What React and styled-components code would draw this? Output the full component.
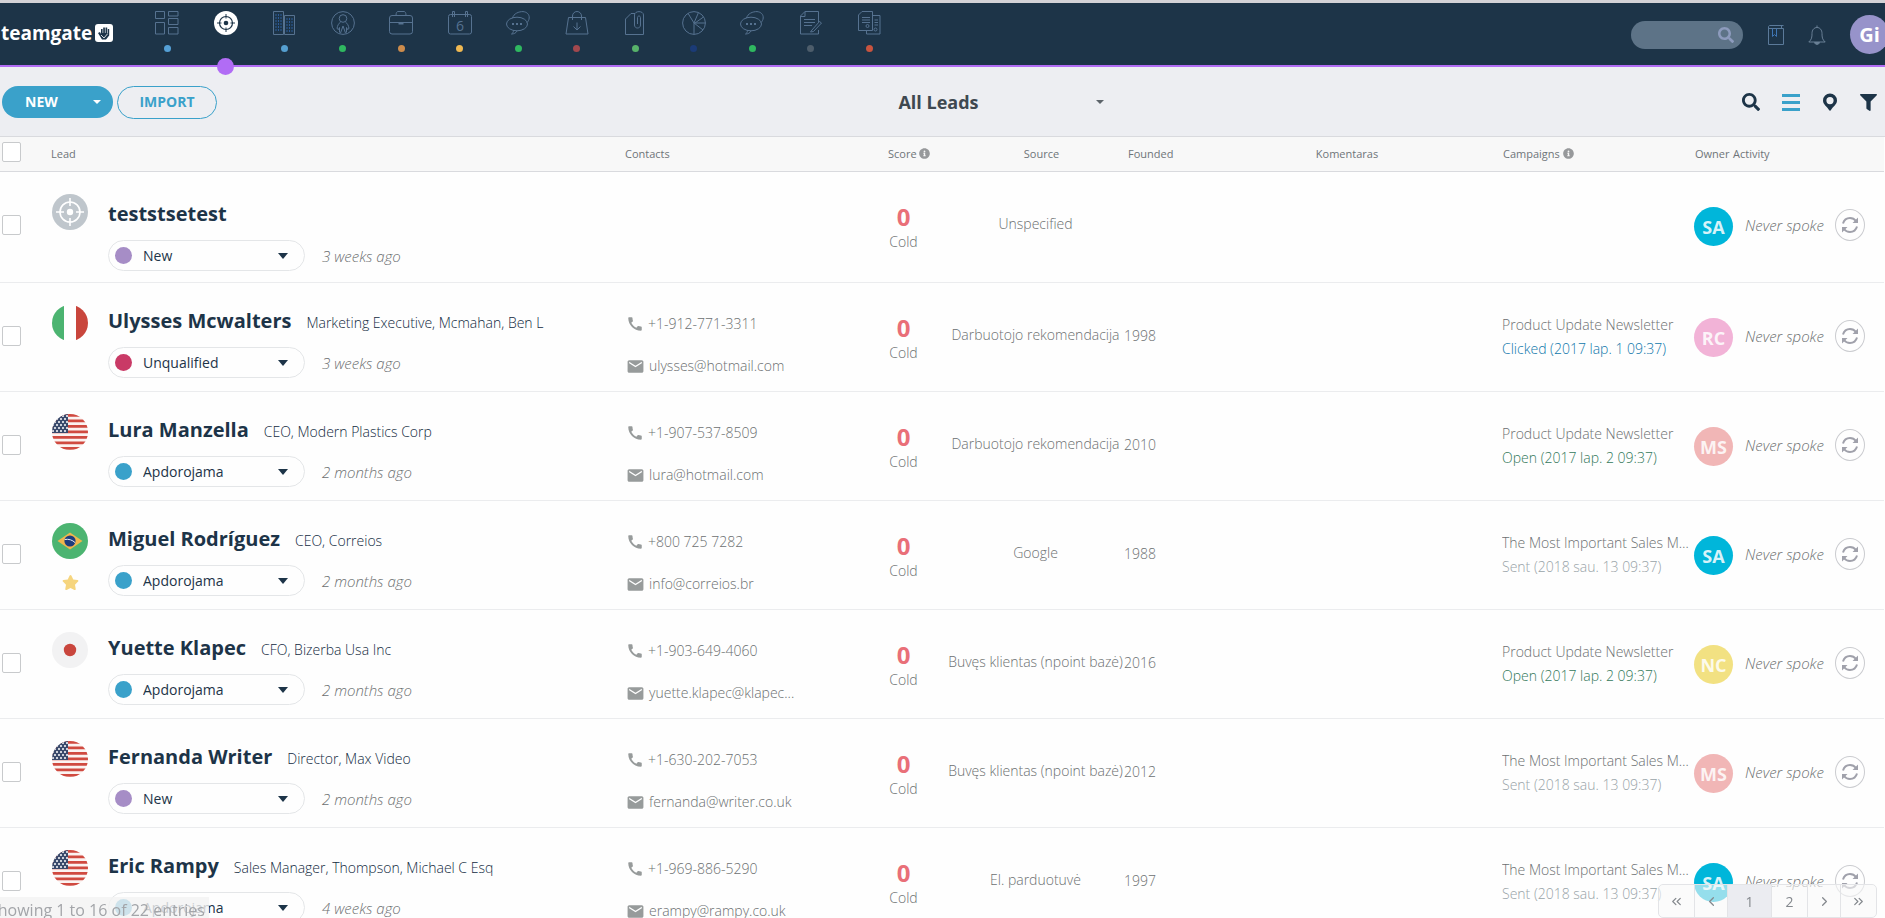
import React from "react";
import styled, { createGlobalStyle, css } from "styled-components";
import { FaSearch, FaInfoCircle, FaFilter, FaStar } from "react-icons/fa";
import { MdCall, MdEmail } from "react-icons/md";
import { ChevronLeft, ChevronRight, ChevronsLeft, ChevronsRight } from "lucide-react";

const GlobalStyle = createGlobalStyle`
  * { box-sizing: border-box; }
  body {
    margin: 0;
    overflow: hidden;
    background: #fefefe;
    color: #6c7071;
    font-family: "Open Sans", "Noto Sans", sans-serif;
    font-size: 14px;
    font-weight: 300;
    line-height: 20px;
  }
  button, select, input { font-family: inherit; }
`;

const Page = styled.div`
  height: 100vh;
  overflow: hidden;
`;

/* ---------- top bar ---------- */

const TopBar = styled.header`
  display: flex;
  align-items: flex-start;
  height: 67px;
  padding-left: 1px;
  background: #1d3448;
  border-top: 3px solid #d3d2d6;
  border-bottom: 2px solid #b16cf5;
`;

const Logo = styled.a`
  display: flex;
  align-items: center;
  gap: 3px;
  width: 154px;
  padding-top: 17px;
  color: #fff;
  font-size: 19px;
  font-weight: 700;
  line-height: 26px;
  text-decoration: none;
`;

const Nav = styled.nav`
  display: flex;
  justify-content: space-between;
  width: 726px;
  padding-top: 8px;
`;

const NavItem = styled.a`
  display: flex;
  flex-direction: column;
  align-items: center;
  gap: ${props => props.$active ? 23 : 10}px;
  width: 24px;
  color: ${props => props.$active ? "#fff" : "#567290"};

  svg { display: block; fill: none; stroke: currentColor; }
`;

const NavDot = styled.span`
  flex: none;
  width: ${props => props.$big ? 17 : 7}px;
  height: ${props => props.$big ? 17 : 7}px;
  border-radius: 50%;
  background: ${props => props.$color};
  z-index: 1;
`;

const TopRight = styled.div`
  display: flex;
  align-items: center;
  margin-left: auto;
  margin-right: -4px;
  padding-top: 12px;
  color: #5b7186;
`;

const SearchBox = styled.label`
  display: flex;
  align-items: center;
  width: 112px;
  height: 28px;
  padding: 0 9px 0 14px;
  margin-right: 25px;
  border-radius: 14px;
  background: #5d7387;
  color: #8d9bbd;

  input {
    flex: 1;
    min-width: 0;
    border: 0;
    outline: 0;
    background: transparent;
    color: #fff;
  }
`;

const IconButton = styled.button`
  display: flex;
  padding: 0;
  border: 0;
  background: none;
  color: ${props => props.$color || "#1d3448"};
`;

const TopActions = styled.div`
  display: flex;
  align-items: center;
  gap: 24px;
`;

const Avatar = styled.span`
  display: flex;
  flex: none;
  align-items: center;
  justify-content: center;
  width: 39px;
  height: 39px;
  border-radius: 50%;
  background: ${props => props.$color};
  color: ${props => props.$plain ? "#fff" : "rgba(255, 255, 255, 0.85)"};
  font-size: ${props => props.$plain ? 20 : 18}px;
  font-weight: 700;
`;

/* ---------- toolbar ---------- */

const Toolbar = styled.div`
  display: grid;
  grid-template-columns: 1fr auto 1fr;
  align-items: center;
  height: 70px;
  padding: 1px 8px 0 2px;
  background: #edeef2;
  border-bottom: 1px solid #d9dade;
`;

const Buttons = styled.div`
  display: flex;
  align-items: center;
  gap: 4px;
`;

const SplitButton = styled.div`
  display: flex;
  height: 32px;
  border-radius: 16px;
  overflow: hidden;
  background: #3aa1ca;
`;

const pillText = css`
  border: 0;
  padding: 0;
  font-size: 14px;
  font-weight: 700;
  line-height: 30px;
`;

const NewButton = styled.button`
  ${pillText}
  width: 79px;
  background: none;
  color: #fff;
`;

const NewMenuButton = styled.button`
  ${pillText}
  display: flex;
  align-items: center;
  justify-content: center;
  width: 32px;
  background: none;
  color: #fff;
`;

const ImportButton = styled.button`
  ${pillText}
  width: 100px;
  height: 33px;
  border: 1px solid #3aa1ca;
  border-radius: 17px;
  background: none;
  color: #3aa1ca;
`;

const Caret = styled.span`
  flex: none;
  width: 0;
  border: ${props => props.$size}px solid transparent;
  border-top-color: ${props => props.$color};
  border-top-width: ${props => props.$size + (props.$tall ? 1 : 0)}px;
  border-bottom: 0;
  pointer-events: none;
`;

const ViewPicker = styled.label`
  display: flex;
  align-items: center;
  width: 328px;

  select {
    flex: 1;
    padding-left: 6px;
    appearance: none;
    border: 0;
    background: none;
    color: #3f4850;
    font-size: 18px;
    font-weight: 700;
    line-height: 26px;
    text-align: center;
    text-align-last: center;
  }
`;

const ViewActions = styled.div`
  display: flex;
  align-items: center;
  justify-content: flex-end;
  gap: 22px;
`;

/* ---------- table ---------- */

const Table = styled.table`
  width: calc(100% - 1px);
  border-collapse: separate;
  border-spacing: 0;
  table-layout: fixed;
`;

const Th = styled.th`
  height: 35px;
  padding: 0 0 ${props => props.$check ? 4 : 0}px ${props => props.$left || 0}px;
  border-bottom: 1px solid #d9dade;
  background: #f8f8f8;
  color: #6f7578;
  font-size: 11px;
  font-weight: 400;
  text-align: ${props => props.$align || "left"};
  white-space: nowrap;

  svg { color: #97999b; vertical-align: -1px; }
`;

const Td = styled.td`
  height: 109px;
  padding: ${props => props.$top}px 0 0 ${props => props.$left || 0}px;
  border-bottom: 1px solid #ebecee;
  vertical-align: top;
  white-space: nowrap;
  text-align: ${props => props.$align || "left"};
`;

const Checkbox = styled.input`
  display: block;
  appearance: none;
  width: 19px;
  height: 20px;
  margin: 0;
  border: 1px solid #c8cacc;
  border-radius: 2px;
  background: #fff;
`;

const LeadCell = styled.div`
  display: grid;
  grid-template-columns: 36px 1fr;
  column-gap: 20px;
  padding-bottom: 11px;
`;

const Badges = styled.div`
  display: flex;
  flex-direction: column;
  align-items: center;
  gap: 15px;

  svg { display: block; }
`;

const LeadInfo = styled.div`
  padding-top: ${props => props.$bare ? 6 : 2}px;
`;

const NameLine = styled.div`
  display: flex;
  align-items: baseline;
  gap: 15px;
`;

const Name = styled.a`
  color: #1d3448;
  font-size: 20px;
  font-weight: 700;
  line-height: 28px;
  text-decoration: none;
`;

const Job = styled.span`
  color: #122a3e;
`;

const StatusLine = styled.div`
  display: flex;
  align-items: center;
  gap: 17px;
  margin-top: 12px;
`;

const StatusPicker = styled.label`
  display: flex;
  align-items: center;
  width: 197px;
  height: 31px;
  padding: 0 16px 0 6px;
  border: 1px solid #e4e6e8;
  border-radius: 16px;
  background: #fefefe;

  select {
    flex: 1;
    min-width: 0;
    margin-left: 11px;
    padding: 0;
    appearance: none;
    border: 0;
    background: none;
    color: #1d3448;
    font-size: 14px;
  }
`;

const StatusDot = styled.span`
  width: 17px;
  height: 17px;
  border-radius: 50%;
  background: ${props => props.$color};
`;

const Muted = styled.em`
  color: #6c7071;
  font-size: 15px;
`;

const Contact = styled.a`
  display: flex;
  align-items: center;
  gap: 4px;
  margin-bottom: 22px;
  color: inherit;
  text-decoration: none;

  &:last-child { margin-bottom: 0; }
  svg { color: #979b9b; }
`;

const Score = styled.div`
  color: #e96f78;
  font-size: 24px;
  font-weight: 700;
  line-height: 30px;
`;

const Campaign = styled.div`
  overflow: hidden;
  line-height: 24px;
  text-overflow: ellipsis;
  color: ${props => props.$color || "inherit"};
`;

const Activity = styled.div`
  display: flex;
  align-items: center;
  gap: 11px;
`;

const RefreshButton = styled.button`
  display: flex;
  align-items: center;
  justify-content: center;
  width: 30px;
  height: 32px;
  padding: 0;
  border: 1px solid #cbccd0;
  border-radius: 50%;
  background: none;
  color: #a0a1ab;
`;

/* ---------- overlays at the bottom ---------- */

const EntryCount = styled.div`
  position: fixed;
  left: -15px;
  bottom: 0;
  height: 21px;
  padding: 0 4px;
  background: rgba(243, 243, 243, 0.8);
  color: #a3a5a9;
  font-size: 16px;
  font-weight: 400;
  line-height: 26px;
`;

const Pagination = styled.nav`
  position: fixed;
  right: 8px;
  bottom: 0;
  display: flex;
  height: 34px;
  border: 1px solid #e3e4e7;
  border-radius: 5px;
  overflow: hidden;
  background: rgba(248, 248, 248, 0.6);
`;

const PageButton = styled.button`
  display: flex;
  align-items: center;
  justify-content: center;
  width: ${props => props.$width}px;
  padding: 0;
  border: 0;
  border-right: 1px solid #e3e4e7;
  background: ${props => props.$active ? "#ebecf1" : "transparent"};
  color: #85898e;
  font-size: 14px;

  &:last-child { border-right: 0; }
`;

/* ---------- drawings ---------- */

function LogoMark() {
    return (
        <svg width="18" height="18" viewBox="0 0 18 18">
            <rect width="18" height="18" rx="3" fill="#fff" />
            <path d="M3 9l2-1 1 2V5h1.6v4h.6V3.4h1.7V9h.6V3.6h1.7V9.4h.6V5h1.4v6.5L11 15.5H7z" fill="#1d3448" />
            <path d="M6 11l3 3 3.4-4" stroke="#fff" fill="none" strokeWidth="0.8" />
        </svg>
    )
}

function Chats() {
    return (
        <>
            <ellipse cx="11" cy="13" rx="10.5" ry="6.8" />
            <path d="M6.5 7.2C7.5 2.5 13 .5 17 .6c4 .3 6.5 3 6.2 6.4-.2 2-1 3.4-2.2 4.5M7.500 19.300c0 1.500-.5 2.700-2 3.700 2.500 0 4.500-1 5.500-3" />
            <path d="M6 13h2M10 13h2M14 13h2" strokeWidth="2" />
        </>
    )
}

const drawings = {
    dashboard: (
        <path d="M.5.5h9v7h-9zM13.500.5h9.500v4.500h-9.500zM13.500 7.500h9.500v6h-9.500zM.5 11.500h9v11.500h-9zM13.500 16.500h9.500V23h-9.500z" />
    ),
    leads: (
        <>
            <circle cx="12" cy="12" r="12" fill="#fff" stroke="none" />
            <circle cx="12" cy="12" r="6.500" stroke="#1d3448" strokeWidth="1.200" />
            <circle cx="12" cy="12" r="2.300" fill="#1d3448" stroke="none" />
            <path d="M12 3v4.500M12 16.500V21M3 12h4.500M16.500 12H21" stroke="#1d3448" />
        </>
    ),
    companies: (
        <>
            <path d="M1.500.5h10v23h-10zM12.500 4.500h10v19h-10z" />
            <path d="M4 3v18M6.500 3v18M9 3v18M15 7v14M17.500 7v14M20 7v14" stroke="#2c5c99" strokeDasharray="2 1" />
        </>
    ),
    people: (
        <>
            <circle cx="12" cy="12" r="11.400" />
            <circle cx="12" cy="7.500" r="3.800" />
            <path d="M8.500 21.500v-5l-1 2-1.500-1c.5-3 1.500-5 3.500-6.300M15.500 21.500v-5l1 2 1.500-1c-.5-3-1.500-5-3.500-6.300M9.500 22l2.500-7 2.500 7" />
        </>
    ),
    deals: (
        <>
            <rect x="0.500" y="4.500" width="23" height="18.500" rx="2.500" />
            <path d="M7 4.500c0-3 1-4 2-4h6c1 0 2 1 2 4M1 11.500h22" />
            <path d="M9.500 12.500h5" strokeWidth="2" />
        </>
    ),
    calendar: (
        <>
            <rect x="0.500" y="3.500" width="23" height="19.500" rx="2" />
            <path d="M4.500 6V.5h2V6M17.500 6V.5h2V6" />
            <text x="12" y="19.500" textAnchor="middle" fontSize="14" fontWeight="400" fill="currentColor" stroke="none">6</text>
        </>
    ),
    products: (
        <path d="M3.500 6.500h17l2.500 16.500H1zM7.500 9V5c0-2.500 2-4.500 4.500-4.500S16.500 2.500 16.500 5v4M12 11.500v7M8.500 15.500l3.500 3.500 3.500-3.500" />
    ),
    files: (
        <>
            <path d="M12 2.500H8L2.500 8v15.500h18V4.500" />
            <path d="M20.500 14V4c0-4.500-9-4.500-9 0v10c0 4 6 4 6 0V6.500c0-2-3-2-3 0V13" />
        </>
    ),
    reports: (
        <>
            <circle cx="12" cy="12" r="11.400" />
            <path d="M12 12v11.500M12 12L6 2.300M12 12L16.500 1.500M12 12h11.500M12 12l9 7M13 12l8.500-6" />
        </>
    ),
    notes: (
        <>
            <path d="M19.500 11V.5H6L1.500 5v18h18v-4M1.500 5.500H6V.5" />
            <path d="M5 8.500h11M5 11.500h11M5 14.500h8M13 19l-1.500 2 3-.5 8-8.500-2-1.500z" />
        </>
    ),
    invoices: (
        <>
            <path d="M15.500 4V.5H5L1.500 4v15.500h14zM15.500 4.500h7.500V23H9.500v-3.500" />
            <path d="M5 6.500h8M5 9h8M5 11.500h8M17.500 9h3.500M17.500 11.500h3.500M17.500 14h3.500" />
            <circle cx="10.500" cy="15" r="1.500" />
            <circle cx="18.500" cy="18.500" r="1.500" />
        </>
    ),
    chats: <Chats />,
};

function Stars() {
    const dots = [];
    for (let y = 2; y < 18; y += 3) {
        for (let x = (y % 2) ? 1 : 3; x < 16; x += 4) {
            dots.push(<circle key={x + "-" + y} cx={x} cy={y} r="1" fill="#fff" />)
        }
    }
    return dots
}

function Badge({ type }) {
    const id = React.useId();
    return (
        <svg width="36" height="36" viewBox="0 0 36 36">
            <clipPath id={id}><circle cx="18" cy="18" r="18" /></clipPath>
            <g clipPath={`url(#${id})`}>
                {type === "target" && (
                    <>
                        <rect width="36" height="36" fill="#bfc6cc" />
                        <g fill="none" stroke="#fff" strokeWidth="1.600">
                            <circle cx="18" cy="18" r="10" />
                            <path d="M18 4v8M18 24v8M4 18h8M24 18h8" />
                        </g>
                        <circle cx="18" cy="18" r="3.200" fill="#fff" />
                    </>
                )}
                {type === "it" && (
                    <>
                        <rect width="36" height="36" fill="#fff" />
                        <rect width="12" height="36" fill="#4cb471" />
                        <rect x="24" width="12" height="36" fill="#c9463d" />
                    </>
                )}
                {type === "us" && (
                    <>
                        <rect width="36" height="36" fill="#fbf3f1" />
                        <path d="M0 1.400h36M0 6.900h36M0 12.400h36M0 17.900h36M0 23.400h36M0 28.900h36M0 34.400h36" stroke="#d04a40" strokeWidth="2.800" />
                        <rect width="16" height="19" fill="#3a4a6c" />
                        <Stars />
                    </>
                )}
                {type === "br" && (
                    <>
                        <rect width="36" height="36" fill="#4cb471" />
                        <path d="M18 9.500L30.500 18 18 26.500 5.500 18z" fill="#f0b64c" />
                        <circle cx="18" cy="18" r="5.600" fill="#1f3c7d" />
                        <path d="M12.700 16.500c4-.7 7.500.3 10.500 3.200" fill="none" stroke="#e8edf4" />
                    </>
                )}
                {type === "jp" && (
                    <>
                        <rect width="36" height="36" fill="#f2f2f3" />
                        <circle cx="18" cy="18" r="6.200" fill="#c9463d" />
                    </>
                )}
            </g>
        </svg>
    )
}

function Refresh() {
    return (
        <svg width="18" height="18" viewBox="0 0 18 18" fill="none" stroke="currentColor" strokeWidth="2">
            <path d="M2 7.500C3 4 6 2 9 2c2.500 0 4.500 1 6 3M16 10.500C15 14 12 16 9 16c-2.500 0-4.500-1-6-3" />
            <path d="M17 1.500V7h-5.500zM1 16.500V11h5.500z" fill="currentColor" stroke="none" />
        </svg>
    )
}

/* ---------- data ---------- */

const navItems = [
    { name: "Dashboard", icon: "dashboard", color: "#55a0d6" },
    { name: "Leads", icon: "leads", color: "#b16cf5", active: true },
    { name: "Companies", icon: "companies", color: "#559fd0" },
    { name: "People", icon: "people", color: "#2fb860" },
    { name: "Deals", icon: "deals", color: "#cd8c4c" },
    { name: "Calendar", icon: "calendar", color: "#f0b952" },
    { name: "Communication", icon: "chats", color: "#2fb860" },
    { name: "Products", icon: "products", color: "#a2484e" },
    { name: "Files", icon: "files", color: "#57b26a" },
    { name: "Reports", icon: "reports", color: "#1b3b77" },
    { name: "Messages", icon: "chats", color: "#2fb860" },
    { name: "Notes", icon: "notes", color: "#4d5d6b" },
    { name: "Invoices", icon: "invoices", color: "#c9543f" },
];

const statusColors = { New: "#a68dc6", Unqualified: "#c93a66", Apdorojama: "#3aa1ca" };
const ownerColors = { SA: "#00b6da", RC: "#f2b3d7", MS: "#f1b6b6", NC: "#f2e182" };
const resultColors = { Clicked: "#0f77ab", Open: "#34795b", Sent: "#98a3a8" };

const newsletter = "Product Update Newsletter";
const sales = "The Most Important Sales Metrics";

const leads = [
    { name: "teststsetest", badge: "target", status: "New", time: "3 weeks ago", source: "Unspecified", owner: "SA" },
    { name: "Ulysses Mcwalters", job: "Marketing Executive, Mcmahan, Ben L", badge: "it", status: "Unqualified", time: "3 weeks ago", phone: "+1-912-771-3311", email: "ulysses@hotmail.com", source: "Darbuotojo rekomendacija", founded: 1998, campaign: newsletter, result: "Clicked", date: "2017 lap. 1 09:37", owner: "RC" },
    { name: "Lura Manzella", job: "CEO, Modern Plastics Corp", badge: "us", status: "Apdorojama", time: "2 months ago", phone: "+1-907-537-8509", email: "lura@hotmail.com", source: "Darbuotojo rekomendacija", founded: 2010, campaign: newsletter, result: "Open", date: "2017 lap. 2 09:37", owner: "MS" },
    { name: "Miguel Rodríguez", job: "CEO, Correios", badge: "br", star: true, status: "Apdorojama", time: "2 months ago", phone: "+800 725 7282", email: "info@correios.br", source: "Google", founded: 1988, campaign: sales, result: "Sent", date: "2018 sau. 13 09:37", owner: "SA" },
    { name: "Yuette Klapec", job: "CFO, Bizerba Usa Inc", badge: "jp", status: "Apdorojama", time: "2 months ago", phone: "+1-903-649-4060", email: "yuette.klapec@klapec...", source: "Buvęs klientas (npoint bazė)", founded: 2016, campaign: newsletter, result: "Open", date: "2017 lap. 2 09:37", owner: "NC" },
    { name: "Fernanda Writer", job: "Director, Max Video", badge: "us", status: "New", time: "2 months ago", phone: "+1-630-202-7053", email: "fernanda@writer.co.uk", source: "Buvęs klientas (npoint bazė)", founded: 2012, campaign: sales, result: "Sent", date: "2018 sau. 13 09:37", owner: "MS" },
    { name: "Eric Rampy", job: "Sales Manager, Thompson, Michael C Esq", badge: "us", status: "Apdorojama", time: "4 weeks ago", phone: "+1-969-886-5290", email: "erampy@rampy.co.uk", source: "El. parduotuvė", founded: 1997, campaign: sales, result: "Sent", date: "2018 sau. 13 09:37", owner: "SA" },
];

function Header() {
    return (
        <TopBar>
            <Logo href="#">teamgate<LogoMark /></Logo>
            <Nav>
                {navItems.map(item => (
                    <NavItem key={item.name} href="#" aria-label={item.name} $active={item.active}>
                        <svg width="24" height="24" viewBox="0 0 24 24">{drawings[item.icon]}</svg>
                        <NavDot $color={item.color} $big={item.active} />
                    </NavItem>
                ))}
            </Nav>
            <TopRight>
                <SearchBox>
                    <input type="text" aria-label="Search everything" />
                    <FaSearch size={16} />
                </SearchBox>
                <TopActions>
                    <IconButton $color="#5b7a9a" aria-label="Notebook">
                        <svg width="16" height="20" viewBox="0 0 16 20" fill="none" stroke="currentColor">
                            <path d="M15.500 3.500v16H.5V2C.5 1 1 .5 2 .5h13.500M.8 3.500h14.700M13.500.5v3" />
                            <path d="M4.500 3.500v8l2-2 2 2v-8" stroke="#3f76b5" />
                        </svg>
                    </IconButton>
                    <IconButton $color="#6a8096" aria-label="Notifications">
                        <svg width="18" height="20" viewBox="0 0 18 20" fill="none" stroke="currentColor">
                            <path d="M9 .5v2M.8 17h16.400c-3-2.500-3.200-5-3.200-8.500C14 5 12 2.500 9 2.500S4 5 4 8.500C4 12 3.800 14.500.8 17z" />
                            <path d="M6.500 17.500c.5 2.500 4.500 2.500 5 0z" fill="currentColor" />
                        </svg>
                    </IconButton>
                    <Avatar $color="#9793ca" $plain>Gi</Avatar>
                </TopActions>
            </TopRight>
        </TopBar>
    )
}

function LeadRow({ lead }) {
    return (
        <tr>
            <Td $top={43} $left={2}><Checkbox type="checkbox" aria-label={"Select " + lead.name} /></Td>
            <Td $top={22} $left={1}>
                <LeadCell>
                    <Badges>
                        <Badge type={lead.badge} />
                        {lead.star && <FaStar size={17} color="#f6d57e" />}
                    </Badges>
                    <LeadInfo $bare={!lead.job}>
                        <NameLine>
                            <Name href="#">{lead.name}</Name>
                            {lead.job && <Job>{lead.job}</Job>}
                        </NameLine>
                        <StatusLine>
                            <StatusPicker>
                                <StatusDot $color={statusColors[lead.status]} />
                                <select defaultValue={lead.status} aria-label={"Status of " + lead.name}>
                                    {Object.keys(statusColors).map(s => <option key={s}>{s}</option>)}
                                </select>
                                <Caret $size={5} $tall $color="#1d3448" />
                            </StatusPicker>
                            <Muted>{lead.time}</Muted>
                        </StatusLine>
                    </LeadInfo>
                </LeadCell>
            </Td>
            <Td $top={31} $left={11}>
                {lead.phone && <Contact href="#"><MdCall size={18} />{lead.phone}</Contact>}
                {lead.email && <Contact href="#"><MdEmail size={19} />{lead.email}</Contact>}
            </Td>
            <Td $top={30} $align="center">
                <Score>0</Score>
                Cold
            </Td>
            <Td $top={42} $left={12} $align="center">{lead.source}</Td>
            <Td $top={43}>{lead.founded}</Td>
            <Td />
            <Td $top={30}>
                {lead.campaign && (
                    <>
                        <Campaign>{lead.campaign}</Campaign>
                        <Campaign $color={resultColors[lead.result]}>{lead.result} ({lead.date})</Campaign>
                    </>
                )}
            </Td>
            <Td $top={35} $left={2}><Avatar $color={ownerColors[lead.owner]}>{lead.owner}</Avatar></Td>
            <Td $top={37} $left={12}>
                <Activity>
                    <Muted>Never spoke</Muted>
                    <RefreshButton aria-label="Refresh activity"><Refresh /></RefreshButton>
                </Activity>
            </Td>
        </tr>
    )
}

function App() {
    return (
        <Page>
            <GlobalStyle />
            <Header />
            <Toolbar>
                <Buttons>
                    <SplitButton>
                        <NewButton>NEW</NewButton>
                        <NewMenuButton aria-label="More options"><Caret $size={4} $color="#fff" /></NewMenuButton>
                    </SplitButton>
                    <ImportButton>IMPORT</ImportButton>
                </Buttons>
                <ViewPicker>
                    <select aria-label="View"><option>All Leads</option></select>
                    <Caret $size={4} $color="#5d646a" />
                </ViewPicker>
                <ViewActions>
                    <IconButton aria-label="Search"><FaSearch size={18} /></IconButton>
                    <IconButton aria-label="List" $color="#3aa1ca">
                        <svg width="18" height="18" viewBox="0 0 18 18" fill="currentColor">
                            <path d="M0 1h18v3H0zM0 8h18v3H0zM0 15h18v3H0z" />
                        </svg>
                    </IconButton>
                    <IconButton aria-label="Map">
                        <svg width="16" height="18" viewBox="0 0 16 18" fill="currentColor" fillRule="evenodd">
                            <path d="M8 .5a7 7 0 0 0-7 7C1 11.500 5 13.500 7 17c.5.9 1.500.9 2 0 2-3.500 6-5.500 6-9.500a7 7 0 0 0-7-7zM8 4a3.600 3.600 0 1 1 0 7.200A3.600 3.600 0 0 1 8 4z" />
                        </svg>
                    </IconButton>
                    <IconButton aria-label="Filter"><FaFilter size={17} /></IconButton>
                </ViewActions>
            </Toolbar>
            <Table>
                <colgroup>
                    <col style={{ width: 51 }} />
                    <col />
                    <col style={{ width: 257 }} />
                    <col style={{ width: 63 }} />
                    <col style={{ width: 189 }} />
                    <col style={{ width: 56 }} />
                    <col style={{ width: 322 }} />
                    <col style={{ width: 190 }} />
                    <col style={{ width: 41 }} />
                    <col style={{ width: 151 }} />
                </colgroup>
                <thead>
                    <tr>
                        <Th $left={2} $check><Checkbox type="checkbox" aria-label="Select all" /></Th>
                        <Th>Lead</Th>
                        <Th $left={10}>Contacts</Th>
                        <Th $left={16}>Score <FaInfoCircle size={11} /></Th>
                        <Th $left={24} $align="center">Source</Th>
                        <Th $left={4}>Founded</Th>
                        <Th $align="center" $left={12}>Komentaras</Th>
                        <Th $left={1}>Campaigns <FaInfoCircle size={11} /></Th>
                        <Th $left={3}>Owner</Th>
                        <Th>Activity</Th>
                    </tr>
                </thead>
                <tbody>
                    {leads.map(lead => <LeadRow key={lead.name} lead={lead} />)}
                </tbody>
            </Table>
            <EntryCount>Showing 1 to 16 of 22 entries</EntryCount>
            <Pagination aria-label="Pages">
                <PageButton $width={36} aria-label="First"><ChevronsLeft size={15} strokeWidth={2} /></PageButton>
                <PageButton $width={33} aria-label="Previous"><ChevronLeft size={15} strokeWidth={2} /></PageButton>
                <PageButton $width={44} $active>1</PageButton>
                <PageButton $width={36}>2</PageButton>
                <PageButton $width={33} aria-label="Next"><ChevronRight size={15} strokeWidth={2} /></PageButton>
                <PageButton $width={35} aria-label="Last"><ChevronsRight size={15} strokeWidth={2} /></PageButton>
            </Pagination>
        </Page>
    )
}

export default App;
